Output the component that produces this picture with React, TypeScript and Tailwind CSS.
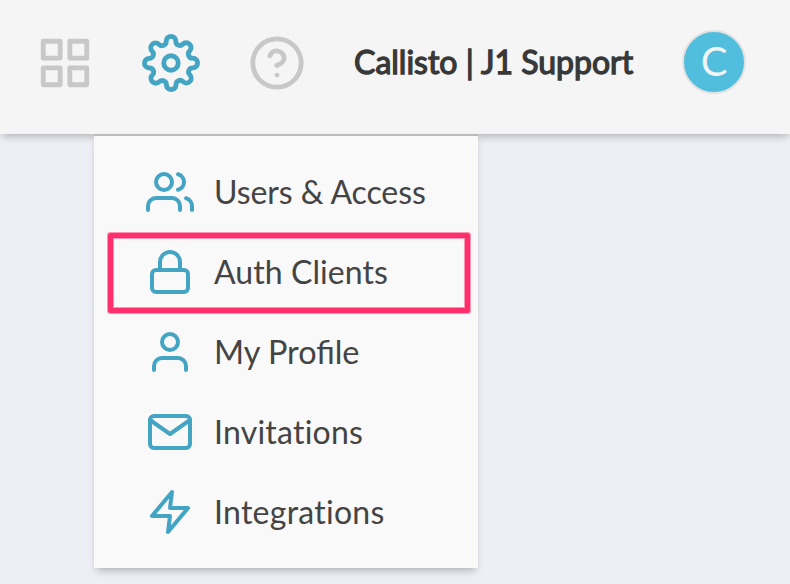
import { FiGrid, FiSettings, FiHelpCircle, FiUsers, FiLock, FiUser, FiMail, FiZap } from "react-icons/fi";

const items = [
  { label: "Users & Access", Icon: FiUsers, text: "text-[32px] tracking-[-0.08px]" },
  { label: "Auth Clients", Icon: FiLock, text: "text-[32px] tracking-[0.08px]" },
  { label: "My Profile", Icon: FiUser, text: "text-[32.4px]" },
  { label: "Invitations", Icon: FiMail, text: "text-[32px] tracking-[0.23px]" },
  { label: "Integrations", Icon: FiZap, text: "text-[32px] tracking-[0.27px]" },
];

export default function App() {
  return (
    <div className="h-[584px] w-[790px] overflow-hidden bg-[#edeff4] font-['Lato',sans-serif]">
      <header className="flex h-[134px] items-start bg-[#f5f5f5] pt-[30px] pl-9 shadow-[0_4px_8px_-2px_rgba(0,0,0,0.28)]">
        <FiGrid size={58} className="mt-1 shrink-0 text-[#c8c8c8]" />
        <FiSettings size={58} className="mt-1 ml-12 shrink-0 text-[#44a4c4]" />
        <FiHelpCircle size={58} className="mt-1 ml-12 shrink-0 text-[#c8c8c8]" />
        <h1 className="ml-12 w-[280px] shrink-0 text-[32px] leading-[64px] font-normal whitespace-nowrap text-[#383838] [-webkit-text-stroke:1.3px_#383838]">Callisto | J1 Support</h1>
        <div className="ml-12 flex size-16 shrink-0 items-center justify-center rounded-full border-2 border-[#e2e2e2] bg-[#51bedd] pb-0.5 text-[40px] text-[#f1f4f7]">C</div>
      </header>
      <nav className="relative ml-[94px] h-[434px] w-[384px] border-t-2 border-[#bbb] bg-[#f9f9f9] pt-4 shadow-[0_6px_8px_-3px_rgba(0,0,0,0.2),0_2px_6px_rgba(0,0,0,0.06)]">
        {items.map(({ label, Icon, text }) => (
          <a key={label} className="flex h-20 items-center pl-[52px] text-[#444]">
            <Icon size={48} className="mr-5 shrink-0 text-[#44a4c4]" />
            <span className={text}>{label}</span>
          </a>
        ))}
        <div className="absolute top-[97px] left-[14px] h-20 w-[362px] rounded-[2px] border-[5px] border-[#ff2f6c] shadow-[0_0_0_1px_rgba(255,47,108,0.5),inset_0_0_0_1px_rgba(255,47,108,0.5)]" />
      </nav>
    </div>
  );
}
